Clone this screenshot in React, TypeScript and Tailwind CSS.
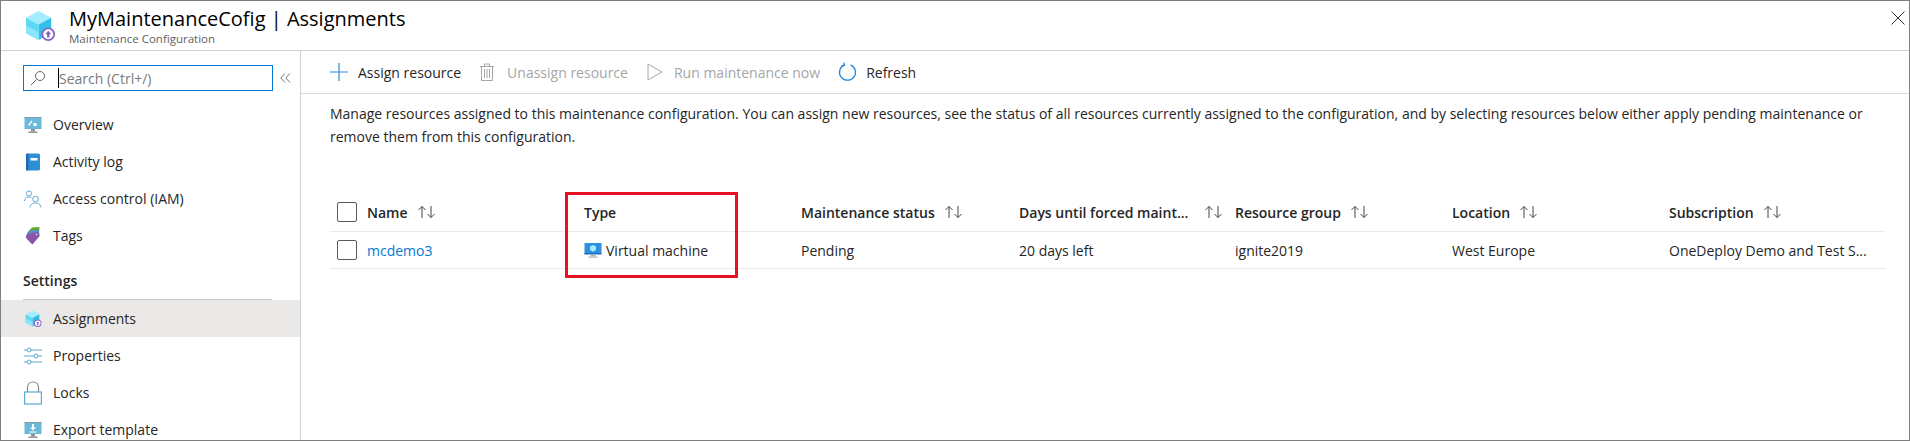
import React from "react";

const font = "font-['Open_Sans','Noto_Sans',sans-serif]";

const CubeIcon = ({ size = 32 }: { size?: number }) => (
  <svg width={size} height={size} viewBox="0 0 32 32">
    <path d="M14 1 L27 8 L14 15 L1 8 Z" fill="#a5ecff" />
    <path d="M1 8 L14 15 L14 31 L1 24 Z" fill="#5fd8f5" />
    <path d="M27 8 L14 15 L14 31 L27 24 Z" fill="#32bfe8" />
    <path d="M1 16 L14 23 L14 31 L1 24 Z" fill="#8be6fb" />
    <circle cx="24" cy="25" r="7" fill="#8661c5" />
    <circle cx="24" cy="25" r="5.2" fill="#fff" />
    <path d="M24 21.5 L27 25 H25.2 V28.5 H22.8 V25 H21 Z" fill="#8661c5" />
  </svg>
);

const Monitor = ({ arrow }: { arrow?: boolean }) => (
  <svg width="18" height="18" viewBox="0 0 18 18">
    <rect x="0.5" y="1" width="17" height="12" fill="#6bb9d8" />
    <rect x="0.5" y="1" width="17" height="1" fill="#8a9aa3" />
    <rect x="7" y="13" width="4" height="2.5" fill="#8c9298" />
    <rect x="4.5" y="15.5" width="9" height="1.5" fill="#8c9298" />
    {arrow ? (
      <path d="M8 3 H10 V6.5 H12 L9 9.5 L6 6.5 H8 Z M5.5 10.5 H12.5 V11.5 H5.5 Z" fill="#fff" />
    ) : (
      <path d="M4 9 L7.5 4.5 L8.5 5.5 L5 10 Z M9.5 7 H12.5 V10 H9.5 Z" fill="#fff" />
    )}
  </svg>
);

const BookIcon = () => (
  <svg width="18" height="18" viewBox="0 0 18 18">
    <rect x="2" y="0.5" width="14" height="17" rx="1.5" fill="#2f8fd6" />
    <rect x="2" y="0.5" width="2.5" height="17" rx="1" fill="#1c6bb0" />
    <rect x="6.5" y="5" width="7" height="2.5" fill="#fff" />
  </svg>
);

const PeopleIcon = () => (
  <svg width="18" height="18" viewBox="0 0 18 18" fill="none" stroke="#5ea9d0" strokeWidth="1">
    <circle cx="5" cy="3.5" r="2.5" />
    <path d="M0.5 11 C1 7.5 3 7 5 7 C6 7 7 7.2 7.5 7.8" />
    <circle cx="11.5" cy="9" r="2.8" />
    <path d="M6 17.5 C6.5 14 9 13 11.5 13 C14 13 16.5 14 17 17.5" />
  </svg>
);

const TagIcon = () => (
  <svg width="18" height="18" viewBox="0 0 18 18">
    <path d="M8 0.5 L15.5 0 L15 6 L7 12 L3 6 Z" fill="#5ea92e" />
    <path d="M5.5 3 L15 3 L15.5 9 L8 17 L1.5 10 Z" fill="#5a8fc8" />
    <path d="M3 7 L14 5 L15.5 9 L8.5 17.5 L2 11 Z" fill="#8a55a8" />
    <circle cx="12.5" cy="7.5" r="0.8" fill="#fff" />
  </svg>
);

const SlidersIcon = () => (
  <svg width="18" height="18" viewBox="0 0 18 18" fill="none" stroke="#5ea9d0" strokeWidth="1">
    <path d="M0 3 H3 M7 3 H18 M0 9 H10 M14 9 H18 M0 15 H3 M7 15 H18" />
    <circle cx="5" cy="3" r="2" />
    <circle cx="12" cy="9" r="2" />
    <circle cx="5" cy="15" r="2" />
  </svg>
);

const LockIcon = () => (
  <svg width="18" height="24" viewBox="0 0 18 24" fill="none" stroke="#5ea9d0" strokeWidth="1.2">
    <rect x="0.6" y="11" width="16.8" height="12" />
    <path d="M3.5 11 V6.5 C3.5 3 6 1 9 1 C12 1 14.5 3 14.5 6.5 V11" stroke="#8a8a8a" />
  </svg>
);

const nav = (label: string, icon: React.ReactNode, active = false) => (
  <div
    key={label}
    className={`flex h-[37px] items-center gap-[11px] pl-[23px] text-[14px] text-[#262626] ${active ? "bg-[#ebe9e8]" : ""}`}
  >
    <span className="flex w-[18px] justify-center">{icon}</span>
    <span className="pb-[1px]">{label}</span>
  </div>
);

const SortArrows = () => (
  <svg width="20" height="14" viewBox="0 0 20 14" fill="none" stroke="#444" strokeWidth="1">
    <path d="M5 13 V1.5 M1.5 5 L5 1.5 L8.5 5" />
    <path d="M14 1 V12.5 M10.5 9 L14 12.5 L17.5 9" />
  </svg>
);

const Header = ({ label, sort = true }: { label: string; sort?: boolean }) => (
  <div className="flex items-center gap-[9px] font-semibold">
    <span>{label}</span>
    {sort && <SortArrows />}
  </div>
);

const Checkbox = () => (
  <div className="h-[20px] w-[20px] rounded-[2px] border border-[#5a5a5a] bg-white" />
);

const VmIcon = () => (
  <svg width="18" height="18" viewBox="0 0 18 18">
    <rect x="0.5" y="2" width="17" height="11" fill="#2f8fe0" />
    <rect x="0.5" y="12" width="17" height="1.5" fill="#1b6fc0" />
    <rect x="6.5" y="13.5" width="5" height="2" fill="#aab4bb" />
    <rect x="4.5" y="15.5" width="9" height="1.2" fill="#aab4bb" />
    <path d="M9 4 L12 5.6 V9 L9 10.8 L6 9 V5.6 Z" fill="#a5ecff" />
  </svg>
);

export default function App() {
  return (
    <div className={`${font} flex h-[441px] w-[1910px] flex-col overflow-hidden border border-[#7f7f7f] bg-white text-[14px] text-[#262626]`}>
      {/* title bar */}
      <div className="flex h-[50px] shrink-0 items-center border-b border-[#d0d0d0] pl-[24px] pr-[4px]">
        <CubeIcon size={31} />
        <div className="ml-[13px] flex-1">
          <div className="text-[20px] leading-[26px] font-medium text-black">MyMaintenanceCofig | Assignments</div>
          <div className="text-[11.5px] leading-[14px] text-[#5f5f5f]">Maintenance Configuration</div>
        </div>
        <svg width="14" height="14" viewBox="0 0 14 14" stroke="#333" strokeWidth="1" className="mb-[16px]">
          <path d="M0.5 0.5 L13.5 13.5 M13.5 0.5 L0.5 13.5" />
        </svg>
      </div>

      <div className="flex min-h-0 flex-1">
        {/* sidebar */}
        <aside className="w-[300px] shrink-0 border-r border-[#d0d0d0]">
          <div className="flex items-center pl-[22px] pt-[14px]">
            <div className="flex h-[26px] w-[250px] items-center border border-[#0078d4] pl-[6px]">
              <svg width="16" height="16" viewBox="0 0 16 16" fill="none" stroke="#666" strokeWidth="1">
                <circle cx="10" cy="6" r="4.5" />
                <path d="M6.5 9.5 L1 15" />
              </svg>
              <span className="ml-[12px] h-[20px] w-px bg-black" />
              <span className="text-[#7a7a7a]">Search (Ctrl+/)</span>
            </div>
            <svg width="11" height="10" viewBox="0 0 11 10" fill="none" stroke="#777" strokeWidth="1" className="ml-[7px]">
              <path d="M5 0.5 L0.8 5 L5 9.5 M10 0.5 L5.8 5 L10 9.5" />
            </svg>
          </div>
          <div className="mt-[15px]">
            {nav("Overview", <Monitor />)}
            {nav("Activity log", <BookIcon />)}
            {nav("Access control (IAM)", <PeopleIcon />)}
            {nav("Tags", <TagIcon />)}
          </div>
          <div className="ml-[22px] mr-[28px] mt-[17px] h-[29px] border-b border-[#c8c8c8] font-semibold leading-[20px]">Settings</div>
          {nav("Assignments", <CubeIcon size={17} />, true)}
          {nav("Properties", <SlidersIcon />)}
          {nav("Locks", <LockIcon />)}
          {nav("Export template", <Monitor arrow />)}
        </aside>

        {/* main */}
        <main className="min-w-0 flex-1">
          <div className="flex h-[43px] items-center border-b border-[#d8d8d8] pl-[29px]">
            <svg width="18" height="18" viewBox="0 0 18 18" stroke="#2b88d8" strokeWidth="1.2">
              <path d="M9 0 V18 M0 9 H18" />
            </svg>
            <span className="ml-[10px]">Assign resource</span>
            <svg width="14" height="18" viewBox="0 0 14 18" fill="none" stroke="#a6a6a6" strokeWidth="1" className="ml-[19px]">
              <path d="M0 3.5 H14 M4.5 3.5 V1 H9.5 V3.5 M1.5 3.5 V17.5 H12.5 V3.5 M4.5 6 V15 M7 6 V15 M9.5 6 V15" />
            </svg>
            <span className="ml-[13px] text-[#a6a6a6]">Unassign resource</span>
            <svg width="16" height="18" viewBox="0 0 16 18" fill="none" stroke="#a6a6a6" strokeWidth="1" className="ml-[19px]">
              <path d="M1 1 L15 9 L1 17 Z" />
            </svg>
            <span className="ml-[11px] text-[#a6a6a6]">Run maintenance now</span>
            <svg width="19" height="20" viewBox="0 0 19 20" fill="none" stroke="#2b88d8" strokeWidth="1.3" className="ml-[18px]">
              <path d="M12.5 2.8 A8 8 0 1 1 6.5 2.8" />
              <path d="M6 0.5 L6.5 3.2 L3.5 4" />
            </svg>
            <span className="ml-[9px]">Refresh</span>
          </div>

          <div className="relative pl-[29px] pr-[23px]">
            <p className="pt-[8px] text-[14px] leading-[23px]">
              Manage resources assigned to this maintenance configuration. You can assign new resources, see the status of all resources currently assigned to the configuration, and by selecting resources below either apply pending maintenance or remove them from this configuration.
            </p>

            <div className="mt-[45px] grid grid-cols-[37px_217px_217px_218px_216px_217px_217px_216px] border-b border-[#ebebeb]">
              <div className="flex h-[39px] items-center border-b border-[#ebebeb] pb-[1px] pl-[7px]"><Checkbox /></div>
              <div className="flex items-center border-b border-[#ebebeb]"><Header label="Name" /></div>
              <div className="flex items-center border-b border-[#ebebeb]"><Header label="Type" sort={false} /></div>
              <div className="flex items-center border-b border-[#ebebeb]"><Header label="Maintenance status" /></div>
              <div className="flex items-center border-b border-[#ebebeb] font-semibold">
                <span>Days until forced maint...</span>
                <span className="ml-[16px]"><SortArrows /></span>
              </div>
              <div className="flex items-center border-b border-[#ebebeb]"><Header label="Resource group" /></div>
              <div className="flex items-center border-b border-[#ebebeb]"><Header label="Location" /></div>
              <div className="flex items-center border-b border-[#ebebeb]"><Header label="Subscription" /></div>

              <div className="flex h-[36px] items-center pl-[7px]"><Checkbox /></div>
              <div className="flex items-center text-[#0078d4]">mcdemo3</div>
              <div className="flex items-center gap-[4px]"><VmIcon />Virtual machine</div>
              <div className="flex items-center">Pending</div>
              <div className="flex items-center">20 days left</div>
              <div className="flex items-center">ignite2019</div>
              <div className="flex items-center">West Europe</div>
              <div className="flex items-center">OneDeploy Demo and Test S...</div>
            </div>
          </div>
        </main>
      </div>

      {/* callout round the Type column */}
      <div className="absolute left-[565px] top-[192px] h-[86px] w-[173px] border-[3px] border-[#e81123]" />
    </div>
  );
}
